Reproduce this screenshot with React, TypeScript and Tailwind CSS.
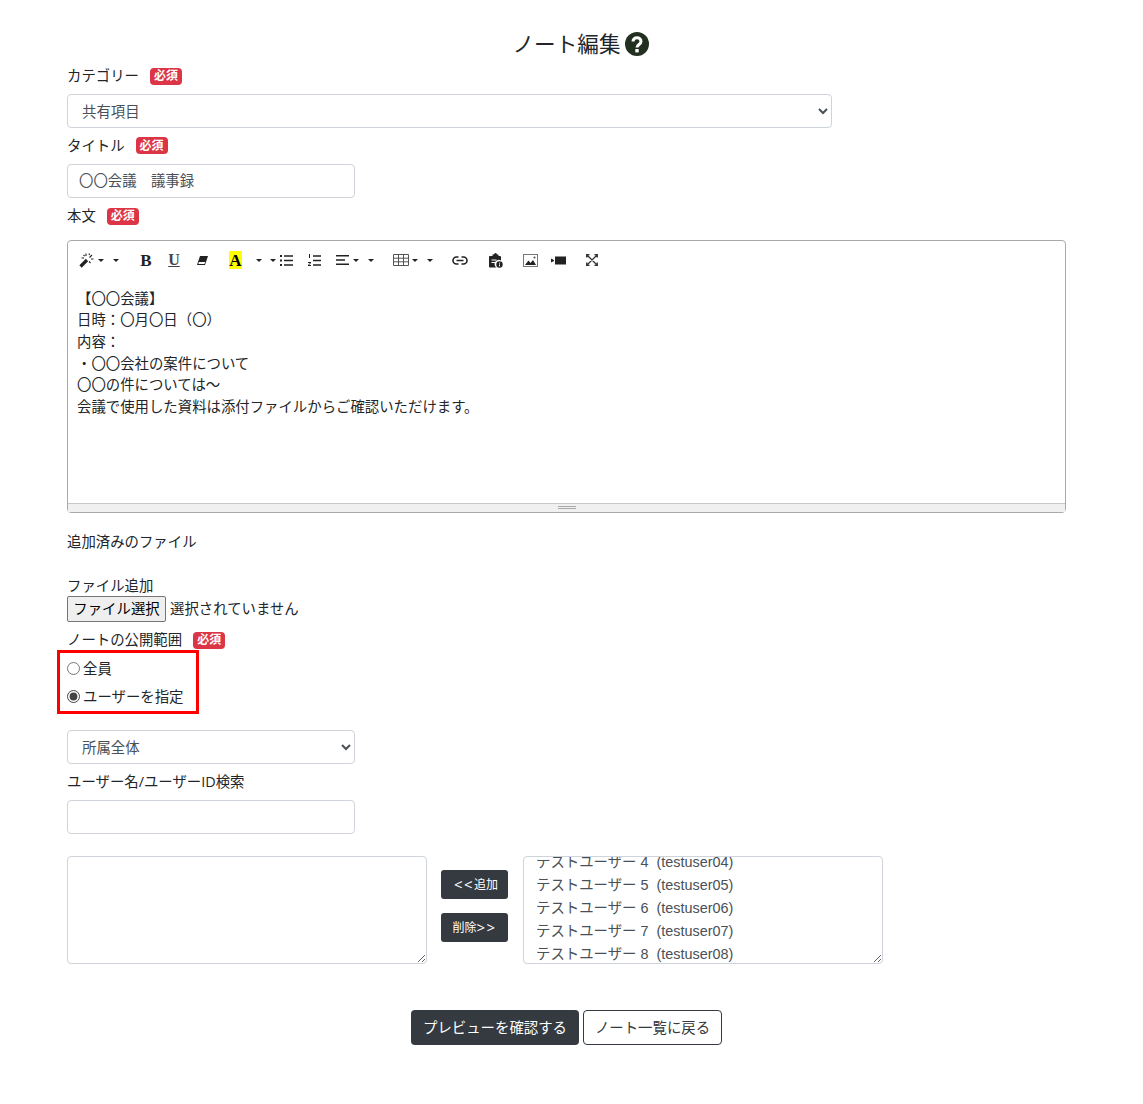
import React from "react";

const inputCls =
  "block h-[34px] rounded-[4px] border border-[#ced4da] bg-white px-[11px] text-[14.4px] text-[#495057]";

function Badge() {
  return (
    <span className="ml-[11px] mt-[1px] inline-flex h-[17px] w-[32px] items-center justify-center rounded-[4px] bg-[#dc3545] text-[12px] font-bold leading-none text-white">
      必須
    </span>
  );
}

function Label({ text, required, gap = "mb-[7px]" }: { text: string; required?: boolean; gap?: string }) {
  return (
    <div className={gap + " flex h-[21.6px] items-center leading-[21.6px]"}>
      <span>{text}</span>
      {required && <Badge />}
    </div>
  );
}

function Caret({ className }: { className: string }) {
  return (
    <span
      className={
        "h-0 w-0 border-x-[3px] border-t-[3px] border-x-transparent border-t-[#222] " + className
      }
    />
  );
}

function WandIcon() {
  return (
    <svg className="ml-[11px]" width="16" height="16" viewBox="0 0 16 16" fill="none" stroke="#222">
      <path strokeWidth="3.200" d="M1.500 14.500 8 8" />
      <path strokeWidth="1.100" d="M7 1.500v2.500M2.500 6H5M12 7h2.500M10.500 5.500 13 3M10 1.500 10.500 3M4.500 3l1.200 1.200M10 9.500l1.500 1.500" />
    </svg>
  );
}

function EraserIcon() {
  return (
    <svg className="ml-[17px]" width="11" height="11" viewBox="0 0 11 11">
      <path fill="#222" d="M3 1h8L8 10H0z" />
      <path fill="#fff" d="M2 7h6.300L7.400 9H1.300z" />
    </svg>
  );
}

function UlIcon() {
  return (
    <svg className="ml-[4px]" width="13" height="11" viewBox="0 0 13 11" fill="#222">
      <path d="M0 0h2v2H0zM0 4.500h2v2H0zM0 9h2v2H0zM4 .2h9v1.500H4zM4 4.700h9v1.500H4zM4 9.200h9v1.500H4z" />
    </svg>
  );
}

function OlIcon() {
  return (
    <svg className="ml-[15px]" width="13" height="13" viewBox="0 0 13 13" fill="#222">
      <path d="M1 0h1v4H1zM0 8h3v1L1 11h2v1H0v-1l2-2H0zM5 1.200h8v1.500H5zM5 5.700h8v1.500H5zM5 10.200h8v1.500H5z" />
    </svg>
  );
}

function AlignIcon() {
  return (
    <svg className="ml-[15px]" width="13" height="10" viewBox="0 0 13 10" fill="#222">
      <path d="M0 0h13v1.500H0zM0 4.200h9v1.500H0zM0 8.500h13V10H0z" />
    </svg>
  );
}

function TableIcon() {
  return (
    <svg className="ml-[19px]" width="16" height="12" viewBox="0 0 16 12" fill="none" stroke="#555" strokeWidth="1">
      <path d="M.5.5h15v11H.5zM.5 4.200h15M.5 7.800h15M5.500.5v11M10.500.5v11" />
    </svg>
  );
}

function LinkIcon() {
  return (
    <svg className="ml-[19px]" width="16" height="9" viewBox="0 0 16 9" fill="none" stroke="#222" strokeWidth="1.600">
      <path d="M6.500 1H4.500a3.500 3.500 0 0 0 0 7h2M9.500 1h2a3.500 3.500 0 0 1 0 7h-2M4.500 4.500h7" />
    </svg>
  );
}

function PasteIcon() {
  return (
    <svg className="ml-[21px]" width="14" height="15" viewBox="0 0 14 15">
      <path
        fill="#222"
        d="M3.500 1.500h1.500a1.500 1.500 0 0 1 3 0h1.500V3h1.500a1 1 0 0 1 1 1v3.500a4 4 0 0 0-4.500 7H1a1 1 0 0 1-1-1V4a1 1 0 0 1 1-1h2.500z"
      />
      <path stroke="#fff" strokeWidth="1" d="M2.500 7h5M2.500 9.500h3.500" />
      <circle cx="10.500" cy="11.500" r="3.200" fill="#222" />
      <path stroke="#fff" strokeWidth="1" d="M10.500 9.700v1M10.500 11.500v1.800" />
    </svg>
  );
}

function ImageIcon() {
  return (
    <svg className="ml-[20px]" width="15" height="13" viewBox="0 0 15 13">
      <rect x=".5" y=".5" width="14" height="12" fill="#fff" stroke="#777" />
      <path fill="#222" d="M2 11l3.500-4.500L7.500 9 10 6l3 5z" />
      <circle cx="11.500" cy="3.500" r="1" fill="#444" />
    </svg>
  );
}

function VideoIcon() {
  return (
    <svg className="ml-[13px]" width="15" height="9" viewBox="0 0 15 9" fill="#222">
      <path d="M0 2.500 3 4v1L0 6.500zM4 .5h11v8H4z" />
    </svg>
  );
}

function ExpandIcon() {
  return (
    <svg className="ml-[20px]" width="12" height="12" viewBox="0 0 12 12" fill="none" stroke="#333" strokeWidth="1.300">
      <path d="M.7 3.500V.7h2.800M8.500.7h2.800v2.800M11.300 8.500v2.800H8.500M3.500 11.300H.7V8.500M1 1l10 10M11 1 1 11" />
    </svg>
  );
}

function Toolbar() {
  return (
    <div className="flex h-[39px] items-center text-[#222]">
      <WandIcon />
      <Caret className="ml-[3px]" />
      <Caret className="ml-[9px]" />
      <span className="ml-[21px] w-[12px] text-center text-[17px] font-bold leading-none [font-family:'Liberation_Serif',serif]">
        B
      </span>
      <span className="ml-[16px] w-[12px] text-center text-[16px] font-bold leading-none text-[#444] underline [font-family:'Liberation_Serif',serif]">
        U
      </span>
      <EraserIcon />
      <span className="ml-[21px] flex h-[18px] w-[13px] items-center justify-center bg-[#ff0] text-[17px] font-bold leading-none text-black [font-family:'Liberation_Serif',serif]">
        A
      </span>
      <Caret className="ml-[14px]" />
      <Caret className="ml-[8px]" />
      <UlIcon />
      <OlIcon />
      <AlignIcon />
      <Caret className="ml-[4px]" />
      <Caret className="ml-[9px]" />
      <TableIcon />
      <Caret className="ml-[3px]" />
      <Caret className="ml-[9px]" />
      <LinkIcon />
      <PasteIcon />
      <ImageIcon />
      <VideoIcon />
      <ExpandIcon />
    </div>
  );
}

const users = [4, 5, 6, 7, 8];

export default function App() {
  return (
    <div
      className="ml-[67px] w-[999px] pb-[59px] text-[14.4px] text-[#212529]"
      style={{ fontFamily: '"Open Sans", "Noto Sans CJK JP", sans-serif' }}
    >
      <div className="flex h-[65px] items-end justify-center pb-[5px]">
        <h1 className="relative text-[21.6px] font-normal leading-[32px]">
          ノート編集
          <svg
            className="absolute left-full top-[4px] ml-[5px]"
            width="24"
            height="24"
            viewBox="0 0 24 24"
          >
            <circle cx="12" cy="12" r="12" fill="#22301f" />
            <path
              fill="none"
              stroke="#fff"
              strokeWidth="3"
              d="M8 9.500c0-5 8-5 8 0 0 3-4 3-4 6"
            />
            <rect x="10.300" y="17" width="3.400" height="3.400" fill="#fff" />
          </svg>
        </h1>
      </div>

      <Label text="カテゴリー" required />
      <select className={inputCls + " mb-[7px] w-[765px] pl-[10px] pt-[2px]"} defaultValue="共有項目">
        <option>共有項目</option>
      </select>

      <Label text="タイトル" required gap="mb-[8px]" />
      <input className={inputCls + " mb-[7px] w-[288px] pb-[4px]"} defaultValue="〇〇会議　議事録" />

      <Label text="本文" required gap="mb-[13px]" />

      <div className="flex h-[273px] flex-col rounded-[4px] border border-[#a9a9a9]">
        <Toolbar />
        <div className="flex-1 px-[9px] pt-[8px] leading-[21.6px]">
          <p>【〇〇会議】</p>
          <p>日時：〇月〇日（〇）</p>
          <p>内容：</p>
          <p>・〇〇会社の案件について</p>
          <p>〇〇の件については～</p>
          <p>会議で使用した資料は添付ファイルからご確認いただけます。</p>
        </div>
        <div className="flex h-[9px] flex-col items-center justify-center gap-[1px] border-t border-[#c8c8c8] bg-[#f0f0f0]">
          <span className="h-px w-[18px] bg-[#a9a9a9]" />
          <span className="h-px w-[18px] bg-[#a9a9a9]" />
        </div>
      </div>

      <div className="mt-[18px] leading-[21.6px]">追加済みのファイル</div>

      <div className="mt-[23px] leading-[21.6px]">ファイル追加</div>
      <div className="-mt-[1px] flex items-center">
        <button className="h-[26px] w-[99px] rounded-[2px] border border-[#767676] bg-[#efefef] text-[14.4px] text-black">
          ファイル選択
        </button>
        <span className="ml-[4px]">選択されていません</span>
      </div>

      <div className="mb-[-1px] mt-[7px] flex h-[21.6px] items-center">
        <span>ノートの公開範囲</span>
        <Badge />
      </div>

      <div className="-ml-[10px] mb-[16px] flex h-[64px] w-[142px] flex-col justify-center gap-[7px] border-[3px] border-[#f00] pl-[7px] pt-[2px]">
        <label className="flex h-[21px] items-center gap-[3px]">
          <input type="radio" name="scope" className="m-0 h-[13px] w-[13px] accent-[#444]" />
          全員
        </label>
        <label className="flex h-[21px] items-center gap-[3px]">
          <input type="radio" name="scope" defaultChecked className="m-0 h-[13px] w-[13px] accent-[#444]" />
          ユーザーを指定
        </label>
      </div>

      <select className={inputCls + " mb-[7px] w-[288px] pl-[10px] pt-[2px]"} defaultValue="所属全体">
        <option>所属全体</option>
      </select>

      <Label text="ユーザー名/ユーザーID検索" gap="mb-[8px]" />
      <input className={inputCls + " w-[288px]"} />

      <div className="mt-[22px] flex items-start">
        <div className="h-[108px] w-[360px] resize overflow-hidden rounded-[4px] border border-[#ced4da]" />
        <div className="ml-[14px] mt-[14px] flex w-[67px] flex-col gap-[14px]">
          <button className="flex h-[29px] items-center justify-center rounded-[3px] bg-[#343a40] pl-[3px] text-[12px] text-white">
            <span className="text-[15px] leading-none tracking-[1.500px]">&lt;&lt;</span>追加
          </button>
          <button className="flex h-[29px] items-center justify-center rounded-[3px] bg-[#343a40] text-[12px] text-white">
            削除<span className="text-[15px] leading-none tracking-[1.500px]">&gt;&gt;</span>
          </button>
        </div>
        <div
          className="ml-[15px] h-[108px] w-[360px] resize overflow-hidden rounded-[4px] border border-[#ced4da] px-[12px] text-[#495057]"
          style={{ fontFamily: '"Liberation Sans", "Noto Sans CJK JP", sans-serif' }}
        >
          <div className="-mt-[6px]">
            {users.map((n) => (
              <div key={n} className="h-[23px] whitespace-pre leading-[23px]">
                {`テストユーザー ${n}  (testuser0${n})`}
              </div>
            ))}
          </div>
        </div>
      </div>

      <div className="mt-[46px] flex justify-center gap-[4px]">
        <button className="h-[35px] w-[168px] rounded-[4px] bg-[#343a40] text-[14.4px] text-white">
          プレビューを確認する
        </button>
        <button className="h-[35px] w-[139px] rounded-[4px] border border-[#343a40] bg-white text-[14.4px] text-[#343a40]">
          ノート一覧に戻る
        </button>
      </div>
    </div>
  );
}
